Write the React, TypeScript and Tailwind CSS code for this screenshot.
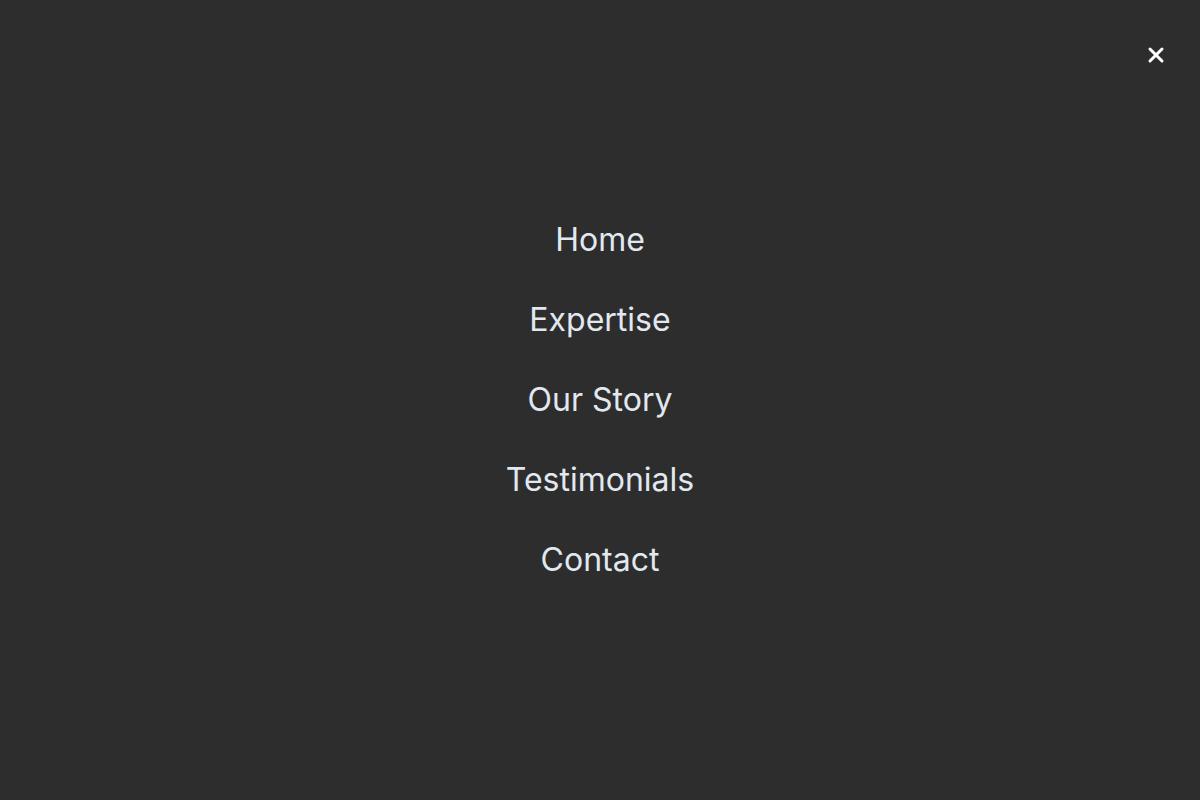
import React from "react";
import { X } from "lucide-react";

const links = ["Home", "Expertise", "Our Story", "Testimonials", "Contact"];

export default function App() {
  return (
    <div
      className="relative flex h-screen w-full items-center justify-center bg-[#2d2d2d]"
      style={{ fontFamily: "Inter, 'Noto Sans', sans-serif" }}
    >
      <button className="absolute right-[32px] top-[43px] text-white">
        <X size={24} strokeWidth={3} />
      </button>
      <nav className="flex flex-col items-center gap-[40px]">
        {links.map((l) => (
          <a key={l} href="#" className="text-[32px] leading-[40px] text-[#e2e8f0]">
            {l}
          </a>
        ))}
      </nav>
    </div>
  );
}
